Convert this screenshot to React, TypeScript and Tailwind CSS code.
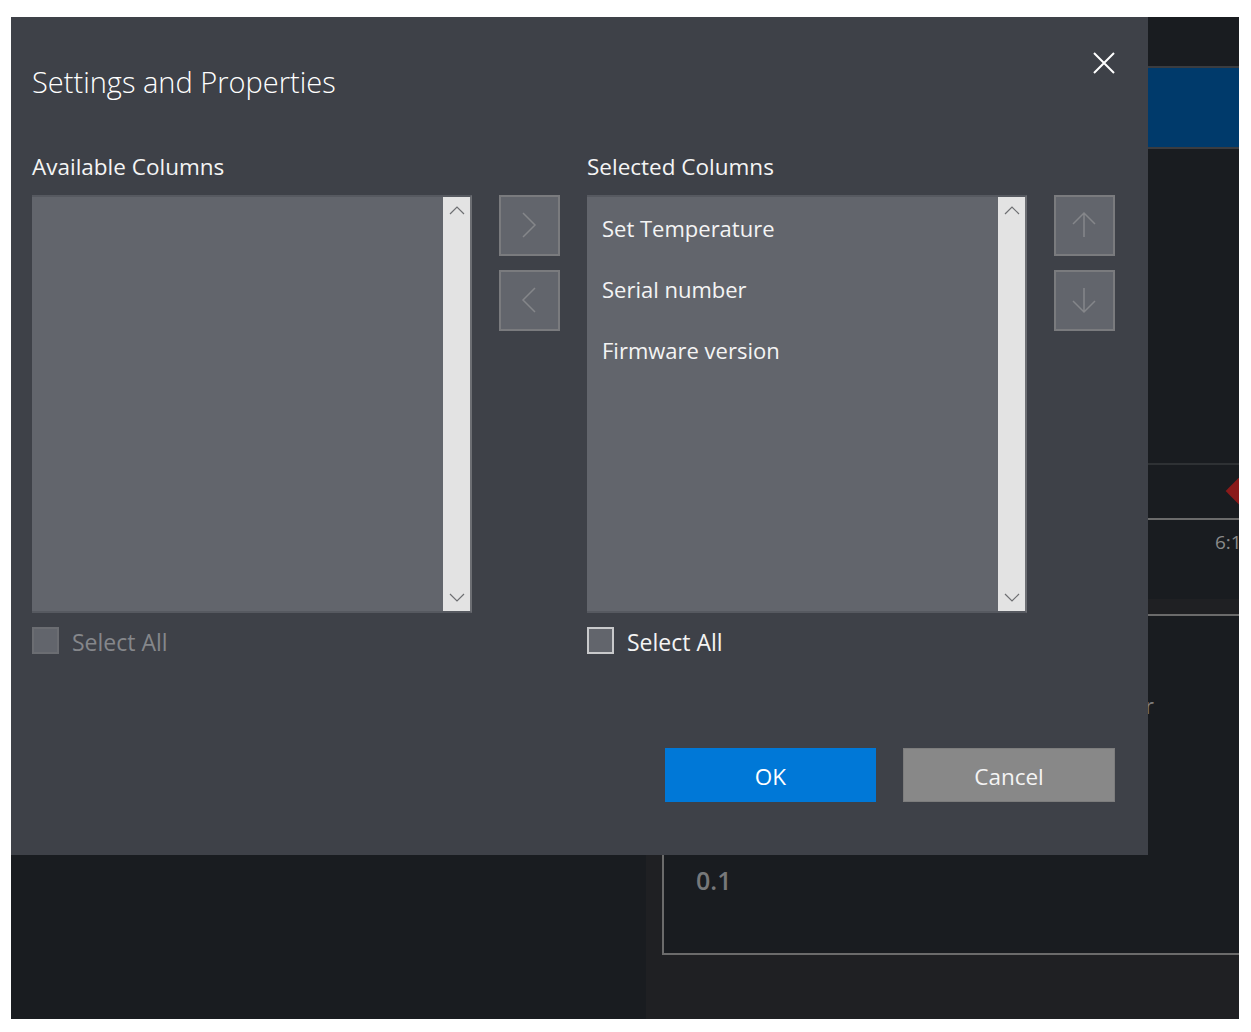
import {ReactNode} from 'react';

const chevronUp = 'M1 8 L8 1 L15 8';
const chevronDown = 'M1 1 L8 8 L15 1';

function ScrollArrow({d}: {d: string}) {
  return (
    <svg width="16" height="9" viewBox="0 0 16 9" fill="none" stroke="#6e6f72" strokeWidth="1.2">
      <path d={d} />
    </svg>
  );
}

function ListBox({items}: {items: string[]}) {
  return (
    <div className="flex h-[418px] w-[440px] border-y-2 border-r-2 border-y-[#565960] border-r-[#6c6e73] bg-[#62656c]">
      <ul className="flex-1 pt-[1px] pl-[15px]">
        {items.map((item) => (
          <li className="h-[61px] text-[22px] leading-[61px] text-[#f4f4f4]" key={item}>
            {item}
          </li>
        ))}
      </ul>
      <div className="flex w-[27px] flex-col items-center justify-between bg-[#e3e3e3] pt-[9px] pb-[9px]">
        <ScrollArrow d={chevronUp} />
        <ScrollArrow d={chevronDown} />
      </div>
    </div>
  );
}

function MoveButton({children}: {children: ReactNode}) {
  return (
    <button className="flex h-[61px] w-[61px] items-center justify-center border-2 border-[#7a7b7e] bg-[#62656c]">
      <svg width="24" height="24" viewBox="1 1 24 24" fill="none" stroke="#85868a" strokeWidth="1.5" overflow="visible">
        {children}
      </svg>
    </button>
  );
}

function SelectAll({disabled}: {disabled?: boolean}) {
  return (
    <label className="mt-[14px] flex h-[27px] items-center gap-[13px]">
      <span
        className={`h-[27px] w-[27px] border-2 bg-[#62656c] ${
          disabled ? 'border-[#6b6d72]' : 'border-[#c8c9cb]'
        }`}
      />
      <span className={`pt-[3px] text-[23px] ${disabled ? 'text-[#85878b]' : 'text-[#f4f4f4]'}`}>
        Select All
      </span>
    </label>
  );
}

function ColumnPicker({
  title,
  items,
  disabled,
  buttons,
}: {
  title: string;
  items: string[];
  disabled?: boolean;
  buttons: ReactNode[];
}) {
  return (
    <div>
      <div className="mb-[13px] h-[30px] text-[22.5px] leading-[30px] text-[#f4f4f4]">{title}</div>
      <div className="flex gap-[27px]">
        <ListBox items={items} />
        <div className="flex flex-col gap-[14px]">
          {buttons.map((icon, i) => (
            <MoveButton key={i}>{icon}</MoveButton>
          ))}
        </div>
      </div>
      <SelectAll disabled={disabled} />
    </div>
  );
}

function Background() {
  return (
    <div className="flex h-full">
      <div className="w-[635px] shrink-0 bg-[#191c20]" />
      <div className="flex min-w-0 flex-1 flex-col bg-[#1f2023]">
        <div className="h-[582px] bg-[#191c20]">
          <div className="h-[49px]" />
          <div className="h-[83px] border-y-2 border-[#3a3c40] bg-[#003a6b]" />
          <div className="h-[314px]" />
          <div className="relative h-[55px] border-t-2 border-[#2e3134]">
            <span className="absolute top-[13px] right-[-18px] h-[26px] w-[26px] rotate-45 bg-[#8a1a1a]" />
          </div>
          <div className="h-[81px] border-t-2 border-[#6b6b6b] pt-[8px] pl-[569px] text-[19px] whitespace-nowrap text-[#8a8a8a]">
            6:1
          </div>
        </div>
        <div className="h-[15px]" />
        <div className="ml-[16px] h-[341px] border-y-2 border-l-2 border-[#6b6b6b] bg-[#191c20]">
          <div className="pt-[75px] pl-[481px] text-[22px] leading-[28px] text-[#7c7c7c]">r</div>
          <div className="pt-[143px] pl-[32px] text-[25px] leading-[36px] font-semibold text-[#77787a]">
            0.1
          </div>
        </div>
      </div>
    </div>
  );
}

export default function App() {
  return (
    <div className="h-[1032px] overflow-hidden bg-white pt-[17px] pr-[12px] pl-[11px] font-['Open_Sans',sans-serif]">
      <div className="relative h-[1002px] overflow-hidden">
        <Background />
        <div className="absolute top-0 left-0 flex h-[838px] w-[1137px] flex-col bg-[#3e4148] pr-[33px] pl-[21px]">
          <div className="flex h-[135px] items-start justify-between pt-[35px]">
            <h1 className="mt-[10px] text-[29px] leading-[40px] font-light text-white">
              Settings and Properties
            </h1>
            <button>
              <svg width="22" height="22" viewBox="0 0 22 22" fill="none" stroke="#ffffff" strokeWidth="2">
                <path d="M1 1 L21 21 M21 1 L1 21" />
              </svg>
            </button>
          </div>
          <div className="flex gap-[27px]">
            <ColumnPicker
              title="Available Columns"
              items={[]}
              disabled
              buttons={[
                <path key="r" d="M6 0 L18 12 L6 24" />,
                <path key="l" d="M18 0 L6 12 L18 24" />,
              ]}
            />
            <ColumnPicker
              title="Selected Columns"
              items={['Set Temperature', 'Serial number', 'Firmware version']}
              buttons={[
                <path key="u" d="M1 11 L12 0 L23 11 M12 0 V24" />,
                <path key="d" d="M1 13 L12 24 L23 13 M12 0 V24" />,
              ]}
            />
          </div>
          <div className="mt-[94px] flex justify-end gap-[27px]">
            <button className="h-[54px] w-[211px] bg-[#0078d7] pt-[3px] text-[22.5px] text-white">OK</button>
            <button className="h-[54px] w-[212px] border border-[#7d7d7d] bg-[#888888] pt-[3px] text-[22.5px] text-[#f4f4f4]">
              Cancel
            </button>
          </div>
        </div>
      </div>
    </div>
  );
}
